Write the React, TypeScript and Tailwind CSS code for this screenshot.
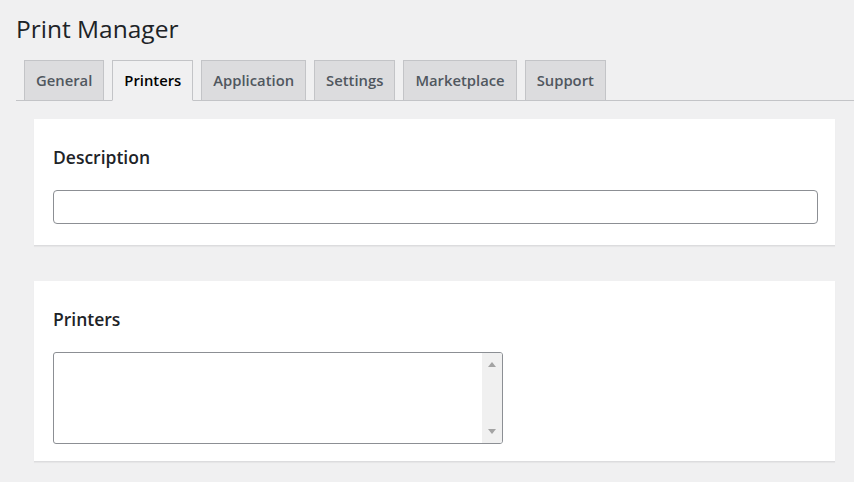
import { useState } from 'react';

const tabs = ['General', 'Printers', 'Application', 'Settings', 'Marketplace', 'Support'];

function Card({ title, children, className }: { title: string; children: React.ReactNode; className?: string }) {
  return (
    <div className={`bg-white border-b border-[#dcdcde] shadow-[0_1px_1px_rgba(0,0,0,0.04)] px-[19px] pt-[26px] ${className ?? ''}`}>
      <h2 className="h-6 leading-6 text-[17.5px] font-semibold text-[#1d2327] mb-[21px]">{title}</h2>
      {children}
    </div>
  );
}

export default function App() {
  const [active, setActive] = useState('Printers');

  return (
    <div className="min-h-screen bg-[#f0f0f1] font-['Open_Sans',sans-serif] text-[#1d2327]">
      <h1 className="pl-[16px] pt-[13px] text-[24.5px] leading-[32px] font-normal text-[#1d2327]">Print Manager</h1>

      <nav className="ml-[16px] mt-[15px] flex gap-2 pl-2 border-b border-[#c3c4c7]">
        {tabs.map((t) => (
          <button
            key={t}
            type="button"
            onClick={() => setActive(t)}
            className={
              t === active
                ? 'h-[41px] -mb-px px-[11px] border border-[#c3c4c7] border-b-[#f0f0f1] bg-[#f0f0f1] text-[14.8px] font-semibold text-black'
                : 'h-[40px] px-[11px] border border-b-0 border-[#c3c4c7] bg-[#dcdcde] text-[14.8px] font-semibold text-[#50575e]'
            }
          >
            {t}
          </button>
        ))}
      </nav>

      <div className="pl-[34px] pr-[19px] pt-[18px] flex flex-col gap-[35px] pb-6">
        <Card title="Description" className="h-[127px]">
          <input
            type="text"
            className="block w-[765px] h-[34px] rounded-[4px] border border-[#8c8f94] bg-white px-2 outline-none"
          />
        </Card>

        <Card title="Printers" className="h-[181px]">
          <div className="flex w-[450px] h-[92px] rounded-[3px] border border-[#8c8f94] bg-white overflow-hidden">
            <div className="flex-1" />
            <div className="w-[20px] bg-[#f0f0f0] flex flex-col items-center justify-between py-[9px]">
              <span className="block w-0 h-0 border-l-[4px] border-r-[4px] border-b-[5px] border-l-transparent border-r-transparent border-b-[#a3a3a3]" />
              <span className="block w-0 h-0 border-l-[4px] border-r-[4px] border-t-[5px] border-l-transparent border-r-transparent border-t-[#a3a3a3]" />
            </div>
          </div>
        </Card>
      </div>
    </div>
  );
}
